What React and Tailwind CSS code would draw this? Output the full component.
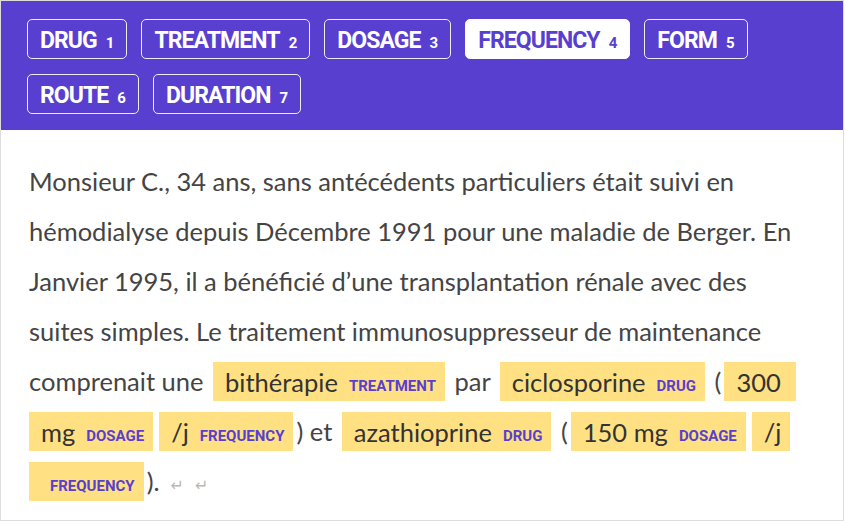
const labels = [
  { name: 'DRUG', n: 1 },
  { name: 'TREATMENT', n: 2 },
  { name: 'DOSAGE', n: 3 },
  { name: 'FREQUENCY', n: 4, active: true },
  { name: 'FORM', n: 5 },
  { name: 'ROUTE', n: 6 },
  { name: 'DURATION', n: 7 },
]

function LabelButton({ name, n, active }) {
  return (
    <button
      className={
        'flex h-[40px] items-center rounded-[5px] border px-[12px] pt-[3px] font-["Roboto"] font-bold ' +
        (active ? 'border-white bg-white text-[#583fcf]' : 'border-white/90 text-white')
      }
    >
      <span className="flex items-baseline">
        <span className="text-[23px] leading-none tracking-[-0.04em]">{name}</span>
        <span className="ml-[9px] text-[15px] leading-none">{n}</span>
      </span>
    </button>
  )
}

// a highlighted entity; `cont` is the piece continued from the line above
function Mark({ children, label, cont }) {
  return (
    <mark
      className={
        'bg-[#ffe184] py-[4.5px] pl-[12px] pr-[9px] text-[#333] ' + (cont ? 'mr-[3px]' : 'mx-[3px]')
      }
    >
      {children}
      {label && (
        <span
          className={
            'font-["Roboto"] text-[15px] leading-none font-bold text-[#583fcf] ' +
            (children ? 'ml-[11px]' : 'ml-[9px]')
          }
        >
          {label}
        </span>
      )}
    </mark>
  )
}

function Ret() {
  return <span className="ml-[11px] font-['DejaVu_Sans'] text-[16px] leading-none text-[#b8b8b8]">↵</span>
}

export default function App() {
  return (
    <div className="h-[521px] w-[844px] overflow-hidden border border-[#ddd] bg-white">
      <div className="flex flex-wrap gap-x-[14px] gap-y-[15px] bg-[#583fcf] pb-[16px] pl-[26px] pr-[20px] pt-[18px]">
        {labels.map((l) => (
          <LabelButton key={l.name} {...l} />
        ))}
      </div>

      <div className="whitespace-nowrap pl-[28px] pt-[26px] font-['Lato'] text-[25.5px] leading-[50px] text-[#444]">
        Monsieur C., 34 ans, sans antécédents particuliers était suivi en
        <br />
        hémodialyse depuis Décembre 1991 pour une maladie de Berger. En
        <br />
        Janvier 1995, il a bénéficié d’une transplantation rénale avec des
        <br />
        suites simples. Le traitement immunosuppresseur de maintenance
        <br />
        comprenait une <Mark label="TREATMENT">bithérapie</Mark> par{' '}
        <Mark label="DRUG">ciclosporine</Mark> (<Mark>300&nbsp;</Mark>
        <br />
        <Mark cont label="DOSAGE">mg</Mark>
        <Mark label="FREQUENCY">/j</Mark>) et <Mark label="DRUG">azathioprine</Mark> (
        <Mark label="DOSAGE">150 mg</Mark>
        <Mark>/j</Mark>
        <br />
        <Mark cont label="FREQUENCY" />
        ).
        <Ret />
        <Ret />
      </div>
    </div>
  )
}
